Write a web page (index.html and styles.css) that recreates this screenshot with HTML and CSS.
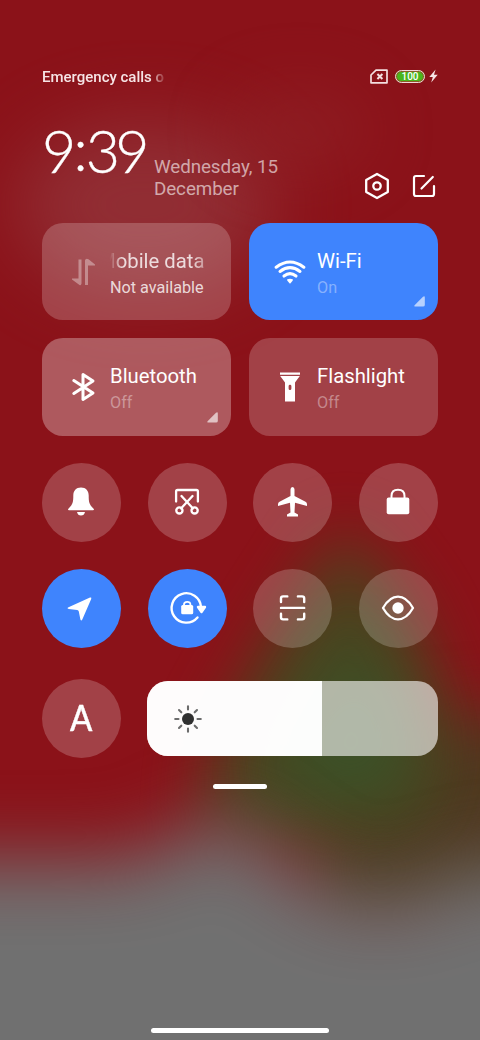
FILE: index.html
```html
<!DOCTYPE html>
<html lang="en">
<head>
<meta charset="utf-8">
<title>Control center</title>
<link rel="stylesheet" href="styles.css">
</head>
<body>
<svg class="wallpaper" viewBox="0 0 480 1040" preserveAspectRatio="none" aria-hidden="true">
  <defs>
    <filter id="b30" filterUnits="userSpaceOnUse" x="-200" y="-200" width="900" height="1500" color-interpolation-filters="sRGB"><feGaussianBlur stdDeviation="32"/></filter>
    <filter id="b40" filterUnits="userSpaceOnUse" x="-200" y="-200" width="900" height="1500" color-interpolation-filters="sRGB"><feGaussianBlur stdDeviation="38"/></filter>
  </defs>
  <rect width="480" height="1040" fill="#8b1219"/>
  <ellipse cx="145" cy="205" rx="130" ry="85" fill="#93353b" opacity=".8" filter="url(#b40)"/>
  <ellipse cx="300" cy="130" rx="70" ry="40" fill="#91282c" opacity=".5" filter="url(#b30)"/>
  <path d="M600 710V940H310V830L430 720Z" fill="#503820" filter="url(#b30)"/>
  <path d="M345 525L415 620L450 720L430 820L310 850L205 830L215 740L265 650Z" fill="#46471f" opacity=".95" filter="url(#b30)"/>
  <path d="M345 640L395 680L420 780L380 810L310 800L270 770Z" fill="#38552b" opacity=".75" filter="url(#b30)"/>
  <path d="M-150 860H120L165 848L205 820H235L285 860L350 898H400L440 882L480 866H650V1250H-150Z" fill="#707070" filter="url(#b40)"/>
</svg>
<main class="panel">
  <header class="status">
    <span class="carrier">Emergency calls o</span>
    <span class="status-icons">
      <svg width="18" height="15" viewBox="0 0 18 15" fill="none" stroke="#f4dfe0" stroke-width="1.7" stroke-linejoin="round"><path d="M6 1.200H17V13.800H1V6Z"/><path d="M7.400 5l5 5M12.400 5l-5 5" stroke-width="2"/></svg>
      <span class="battery">100</span>
      <svg class="bolt" width="9" height="14" viewBox="0 0 9 14" fill="#f6e4e5"><path d="M6.600.5L.3 8H3.800L2.200 13.500 8.700 5.700H5Z"/></svg>
    </span>
  </header>
  <section class="heading">
    <div class="clock">9<span class="colon">:</span>39</div>
    <div class="date">Wednesday, 15 December</div>
    <div class="actions">
      <svg width="26" height="28" viewBox="0 0 26 28" fill="none" stroke="#fff" stroke-width="2.300" stroke-linejoin="round"><path d="M13 2L23.800 8V20L13 26 2.200 20V8Z"/><circle cx="13" cy="14" r="3.700"/></svg>
      <svg width="24" height="24" viewBox="0 0 24 24" fill="none" stroke="#fff" stroke-width="2.200" stroke-linecap="round" stroke-linejoin="round"><path d="M12 2H4Q2 2 2 4V20Q2 22 4 22H20Q22 22 22 20V12"/><path d="M9.500 14.500L20.800 3"/></svg>
    </div>
  </section>
  <section class="tiles">
    <div class="tile">
      <svg class="tile-icon dim" width="32" height="32" viewBox="0 0 32 32" fill="#fff"><path d="M11.500 3.500H14.500V27.500Q14 30 12.500 29L5 23.500V22.500H11.500ZM18 29H21V9.500H28V8.500L21.500 3.300Q18.500 2 18 4.500Z"/></svg>
      <div class="label"><div class="name marquee"><span>Mobile data</span></div><div class="state bright">Not available</div></div>
    </div>
    <div class="tile on">
      <svg class="tile-icon" width="32" height="32" viewBox="0 0 32 32" fill="none" stroke="#fff" stroke-width="3.100" stroke-linecap="round"><path d="M2.200 11.200Q16 .8 29.800 11.200"/><path d="M6 15.400Q16 8 26 15.400M10 20Q16 15.400 22 20"/><path d="M13 23.500Q16 22 19 23.500Q19.200 24.500 16 27.700Q12.800 24.500 13 23.500Z" fill="#fff" stroke="none"/></svg>
      <div class="label"><div class="name">Wi-Fi</div><div class="state">On</div></div>
      <svg class="more" width="11" height="11" viewBox="0 0 11 11"><path d="M9 .8Q10.800-.5 10.800 1.500V9Q10.800 10.600 9 10.600H1.500Q-.5 10.600.8 9Z"/></svg>
    </div>
    <div class="tile soft">
      <svg class="tile-icon" width="32" height="32" viewBox="0 0 32 32" fill="none" stroke="#fff" stroke-width="3" stroke-linecap="round" stroke-linejoin="round"><path d="M6.800 9.500L26 22 16 28.500V3.500L26 10 6.800 22.500"/></svg>
      <div class="label"><div class="name">Bluetooth</div><div class="state">Off</div></div>
      <svg class="more" width="11" height="11" viewBox="0 0 11 11"><path d="M9 .8Q10.800-.5 10.800 1.500V9Q10.800 10.600 9 10.600H1.500Q-.5 10.600.8 9Z"/></svg>
    </div>
    <div class="tile">
      <svg class="tile-icon" width="32" height="32" viewBox="0 0 32 32" fill="#fff"><path fill-rule="evenodd" d="M6 1.500H26V3.800H6ZM6.200 5H25.800L21 11.500V30.500H11V11.500ZM16 13.800Q14.600 13.800 14.600 15.200V17.500Q14.600 19 16 19T17.400 17.500V15.200Q17.400 13.800 16 13.800Z"/></svg>
      <div class="label"><div class="name">Flashlight</div><div class="state">Off</div></div>
    </div>
  </section>
  <section class="toggles">
    <div class="round"><svg width="36" height="36" viewBox="0 0 36 36" fill="#fff"><path d="M18 3.500C13 3.500 10.300 7 10.300 11.500C10.300 18 9.800 20.500 5.600 24.400Q4.200 26 6 26.300H30Q31.800 26 30.400 24.400C26.200 20.500 25.700 18 25.700 11.500C25.700 7 23 3.500 18 3.500ZM14 28H22Q21.200 31.500 18 31.500T14 28Z"/></svg></div>
    <div class="round"><svg width="36" height="36" viewBox="0 0 36 36" fill="none" stroke="#fff" stroke-width="2.300" stroke-linecap="round" stroke-linejoin="round"><path d="M7.100 17.500V7.500Q7.100 6 8.600 6H27.400Q28.900 6 28.900 7.500V17.500"/><path d="M12.500 12L24 24.500M23.500 12L12 24.500"/><circle cx="10.400" cy="26.400" r="3.100"/><circle cx="25.600" cy="26.400" r="3.100"/></svg></div>
    <div class="round"><svg width="36" height="36" viewBox="0 0 36 36" fill="#fff"><path d="M18.500 3Q20.500 3 20.500 5.500V12L31.500 17.800Q33 18.600 33 20.200V22L21 18.700 20.500 28.500 24 30.600V32.500H13V30.600L16.500 28.500 16 18.700 4 22V20.200Q4 18.600 5.500 17.800L16.500 12V5.500Q16.500 3 18.500 3Z"/></svg></div>
    <div class="round"><svg width="36" height="36" viewBox="0 0 36 36"><rect x="6.700" y="13.500" width="22.600" height="16.700" rx="2" fill="#fff"/><path d="M11.500 14.500V12Q11.500 5.800 18 5.800T24.500 12V14.500" fill="none" stroke="#fff" stroke-width="2"/></svg></div>
    <div class="round on"><svg width="36" height="36" viewBox="0 0 36 36" fill="#fff"><path d="M27 7.600Q28.800 7 28.200 8.900L19.300 29.600Q18.300 31.600 17.400 29.600L15.800 21.500Q15.500 20.200 14.200 19.900L5.700 18.900Q3.400 18.200 5.500 17.200Z"/></svg></div>
    <div class="round on"><svg width="40" height="36" viewBox="-2 0 40 36" fill="none" stroke="#fff" stroke-width="2.400" stroke-linecap="round"><path d="M28.500 27.500A14.700 14.700 0 1 1 32 17"/><path d="M29 17H36L32.500 22Z" fill="#fff" stroke-linejoin="round"/><rect x="12.200" y="15" width="12" height="9.200" rx="1.500" fill="#fff" stroke-width="0"/><path d="M15 16V14.500Q15 11.800 18.200 11.800T21.400 14.500V16" stroke-width="1.800"/></svg></div>
    <div class="round"><svg width="36" height="36" viewBox="0 0 36 36" fill="none" stroke="#fff" stroke-width="2.400" stroke-linecap="round"><path d="M7 12V8.500Q7 6.400 9.100 6.400H13.300M23.900 6.400H28.100Q30.200 6.400 30.200 8.500V12M7 23.700V27.300Q7 29.400 9.100 29.400H13.300M23.900 29.400H28.100Q30.200 29.400 30.200 27.300V23.700M7 17.900H30.200"/></svg></div>
    <div class="round"><svg width="36" height="36" viewBox="0 0 36 36"><path d="M3 18Q9.500 6.700 18 6.700T33 18Q26.500 29.300 18 29.300T3 18Z" fill="none" stroke="#fff" stroke-width="2.300" stroke-linejoin="round"/><circle cx="18" cy="18" r="5.700" fill="#fff"/></svg></div>
  </section>
  <section class="brightness">
    <div class="round auto"><span>A</span></div>
    <div class="slider"><div class="level">
      <svg width="28" height="28" viewBox="0 0 28 28"><circle cx="14" cy="14" r="6" fill="#303030"/><path d="M14 1.200V4.500M14 23.500V26.800M1.200 14H4.500M23.500 14H26.800M5 5L7.300 7.300M20.700 20.700L23 23M23 5L20.700 7.300M5 23L7.300 20.700" stroke="#6c6c6c" stroke-width="2.100" stroke-linecap="round"/></svg>
    </div></div>
  </section>
  <div class="handle"></div>
  <div class="home"></div>
</main>
</body>
</html>
```
FILE: styles.css
```css
* { box-sizing: border-box; }
body { margin: 0; width: 480px; height: 1040px; overflow: hidden; background: #8b1219; color: #fff; font-family: Roboto, "Noto Sans", sans-serif; }
svg { display: block; flex: none; }
.wallpaper { position: absolute; inset: 0; width: 480px; height: 1040px; }
.panel { position: relative; display: flex; flex-direction: column; height: 1040px; padding: 66px 42px 7px; }
.status { display: flex; justify-content: space-between; align-items: center; height: 20px; }
.carrier { white-space: nowrap; font-size: 15px; font-weight: 500; line-height: 20px; padding-top: 1px; color: #f6e4e5; -webkit-mask-image: linear-gradient(90deg, #000 108px, transparent 125px); mask-image: linear-gradient(90deg, #000 108px, transparent 125px); }
.status-icons { display: flex; align-items: center; }
.battery { width: 30px; height: 13px; margin: 0 4px 0 7px; border: 1.500px solid #f0d8da; border-radius: 7px; background: #49b51b; box-shadow: inset 0 0 0 1px #8b5c28; font-size: 10px; font-weight: 500; line-height: 11px; text-align: center; }
.heading { display: flex; height: 136px; }
.clock { width: 112px; padding-top: 35px; font-family: Lato, sans-serif; font-size: 59px; font-weight: 300; line-height: 60px; letter-spacing: -4.800px; white-space: nowrap; -webkit-text-stroke: .4px #fff; }
.colon { position: relative; top: -2px; margin: 0 3px 0 2px; }
.date { width: 150px; padding-top: 70px; font-size: 18.800px; letter-spacing: -.08px; line-height: 22px; color: rgba(255,255,255,.6); }
.actions { display: flex; align-items: center; gap: 21.500px; height: 28px; margin: 85.500px 2.500px 0 auto; }
.tiles { display: grid; grid-template-columns: 189px 189px; grid-auto-rows: 97.500px; gap: 18px; margin-top: .8px; }
.tile { position: relative; display: flex; align-items: center; border-radius: 21px; padding-left: 25px; background: rgba(255,255,255,.2); }
.tile.soft { background: rgba(255,255,255,.3); }
.tile.on, .round.on { background: #3f84fd; }
.tile-icon { margin-right: 11px; }
.dim { opacity: .35; }
.label { width: 110px; padding-top: 4px; }
.name { font-size: 20.300px; line-height: 28px; white-space: nowrap; }
.marquee { color: rgba(255,255,255,.8); -webkit-mask-image: linear-gradient(90deg, transparent, #000 12px, #000 82px, rgba(0,0,0,.45) 96px); mask-image: linear-gradient(90deg, transparent, #000 12px, #000 82px, rgba(0,0,0,.45) 96px); }
.marquee span { display: inline-block; margin-left: -12px; }
.state { font-size: 16.200px; line-height: 26px; color: rgba(255,255,255,.38); }
.state.bright { color: rgba(255,255,255,.8); }
.more { position: absolute; right: 13px; bottom: 13px; fill: rgba(255,255,255,.63); }
.toggles { display: grid; grid-template-columns: repeat(4, 79px); justify-content: space-between; row-gap: 27px; margin-top: 27px; }
.toggles svg { margin-right: 1px; }
.round { display: flex; align-items: center; justify-content: center; width: 79px; height: 79px; border-radius: 50%; background: rgba(255,255,255,.2); }
.brightness { display: flex; align-items: center; justify-content: space-between; margin-top: 31.700px; }
.auto { font-family: Lato, sans-serif; font-size: 36px; font-weight: 500; line-height: 40px; }
.auto span { transform: scaleX(.91); margin-bottom: 3px; -webkit-text-stroke: .4px #fff; }
.slider { width: 291px; height: 75px; border-radius: 21px; overflow: hidden; background: rgba(255,255,255,.6); }
.level { display: flex; align-items: center; width: 175px; height: 75px; padding-left: 27px; background: rgba(255,255,255,.965); }
.handle { width: 54px; height: 5px; margin: 26px auto 0; border-radius: 3px; background: #fff; }
.home { width: 178px; height: 5px; margin: auto auto 0; border-radius: 3px; background: #fff; }
```
